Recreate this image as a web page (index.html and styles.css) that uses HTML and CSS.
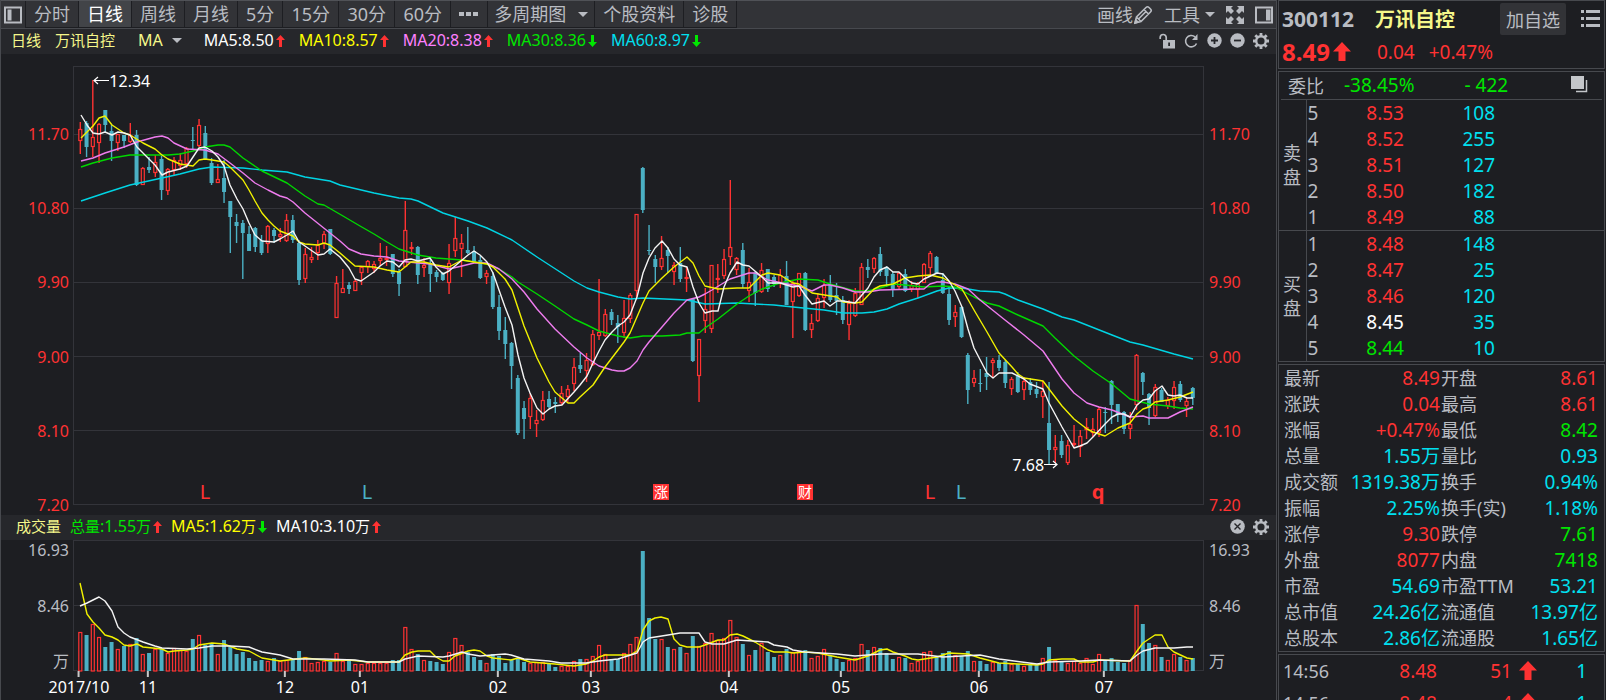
FILE: index.html
```html
<!DOCTYPE html>
<html lang="zh-CN">
<head>
<meta charset="utf-8">
<title>万讯自控 300112</title>
<link rel="stylesheet" href="styles.css">
</head>
<body>
<div class="app">
  <main class="main">
    <header class="toolbar">
      <button class="tool-btn dock-left" aria-label="左侧栏">
        <svg width="18" height="18" viewBox="0 0 18 18"><path d="M1 1.5h16v15H1z" fill="none" stroke="currentColor" stroke-width="2"/><path d="M3.500 3.500h4v11h-4z" fill="currentColor"/></svg>
      </button>
      <nav class="tabs">
        <button class="tab">分时</button>
        <button class="tab active">日线</button>
        <button class="tab">周线</button>
        <button class="tab">月线</button>
        <button class="tab">5分</button>
        <button class="tab minutes">15分</button>
        <button class="tab minutes">30分</button>
        <button class="tab minutes">60分</button>
        <button class="tab more" aria-label="更多"><svg width="20" height="4" viewBox="0 0 20 4"><path d="M0 0h5v4H0zM7 0h5v4H7zM14 0h5v4h-5z" fill="currentColor"/></svg></button>
        <button class="tab multi">多周期图<span class="caret"></span></button>
        <button class="tab wide">个股资料</button>
        <button class="tab wide">诊股</button>
      </nav>
      <div class="tools">
        <button class="tool-btn">画线<svg width="20" height="20" viewBox="0 0 20 20" fill="none" stroke="currentColor" stroke-width="1.6"><path d="M2 18l1.500-6L13 2.500q1.500-1.500 3 0l1.500 1.500q1.500 1.500 0 3L8 16.500zM3.500 12l4.500 4.500M11 4.500L15.500 9M6 13.500l7.500-7.500"/><path d="M2 18l.8-3 2.200 2.200z" fill="currentColor"/></svg></button>
        <button class="tool-btn tool-menu">工具<span class="caret"></span></button>
        <button class="tool-btn" aria-label="全屏"><svg width="18" height="18" viewBox="0 0 18 18" fill="currentColor"><path d="M0 0h7L5 2l3 3-3 3-3-3-2 2zM18 0v7l-2-2-3 3-3-3 3-3-2-2zM0 18v-7l2 2 3-3 3 3-3 3 2 2zM18 18h-7l2-2-3-3 3-3 3 3 2-2z"/></svg></button>
        <button class="tool-btn" aria-label="右侧栏"><svg width="18" height="18" viewBox="0 0 18 18"><path d="M1 1.500h16v15H1z" fill="none" stroke="currentColor" stroke-width="2"/><path d="M11 3.500h4.500v11H11z" fill="currentColor"/></svg></button>
      </div>
    </header>

    <section class="legend">
      <span class="zh pale">日线</span>
      <span class="zh pale stock">万讯自控</span>
      <button class="ma-menu pale">MA<span class="caret"></span></button>
      <div class="ma-list">
        <span class="white">MA5:8.50<svg class="arrow up"><use href="#arrow-up"/></svg></span>
        <span class="yellow">MA10:8.57<svg class="arrow up"><use href="#arrow-up"/></svg></span>
        <span class="violet">MA20:8.38<svg class="arrow up"><use href="#arrow-up"/></svg></span>
        <span class="green">MA30:8.36<svg class="arrow down"><use href="#arrow-down"/></svg></span>
        <span class="cyan">MA60:8.97<svg class="arrow down"><use href="#arrow-down"/></svg></span>
      </div>
      <div class="chart-tools">
        <button aria-label="锁定"><svg width="17" height="16" viewBox="0 0 17 16"><path d="M1.200 6V4.500a3 3 0 0 1 6 0V7" fill="none" stroke="currentColor" stroke-width="1.700"/><path d="M4 7h12v8.500H4zM9.200 9.500v3.500h1.800V9.500z" fill="currentColor" fill-rule="evenodd"/></svg></button>
        <button aria-label="刷新"><svg width="15" height="16" viewBox="0 0 15 16"><path d="M12.500 10.500A5.700 5.700 0 1 1 11 3.800" fill="none" stroke="currentColor" stroke-width="1.600"/><path d="M13.500 1v6H8z" fill="currentColor"/></svg></button>
        <button aria-label="放大"><svg width="15" height="15" viewBox="0 0 15 15"><circle cx="7.500" cy="7.500" r="7.200" fill="currentColor"/><path d="M4 7.500h7M7.500 4v7" stroke="#26272b" stroke-width="1.800"/></svg></button>
        <button aria-label="缩小"><svg width="15" height="15" viewBox="0 0 15 15"><circle cx="7.500" cy="7.500" r="7.200" fill="currentColor"/><path d="M4 7.500h7" stroke="#26272b" stroke-width="1.800"/></svg></button>
        <button aria-label="设置"><svg width="16" height="16" viewBox="0 0 16 16"><use href="#gear"/></svg></button>
      </div>
    </section>

    <section class="price-panel">
      <div class="price-axis left"><span>11.70</span><span>10.80</span><span>9.90</span><span>9.00</span><span>8.10</span><span>7.20</span></div>
      <div class="plot">
        <svg id="price" class="canvas" viewBox="73 66 1131 439" preserveAspectRatio="none"></svg>
        <div class="note high"><svg width="16" height="9" viewBox="0 0 16 9"><path d="M1 4.500h15M5 1L1 4.500 5 8" fill="none" stroke="#fff" stroke-width="1.200"/></svg>12.34</div>
        <div class="note low">7.68<svg width="14" height="9" viewBox="0 0 14 9"><path d="M0 4.500h13M9 1l4 3.500L9 8" fill="none" stroke="#fff" stroke-width="1.200"/></svg></div>
        <div id="events"></div>
      </div>
      <div class="price-axis right"><span>11.70</span><span>10.80</span><span>9.90</span><span>9.00</span><span>8.10</span><span>7.20</span></div>
    </section>

    <section class="legend volume-legend">
      <span class="zh pale">成交量</span>
      <span class="green"><b class="zh">总量</b>:1.55<b class="zh">万</b><svg class="arrow up"><use href="#arrow-up"/></svg></span>
      <span class="yellow">MA5:1.62<b class="zh">万</b><svg class="arrow down"><use href="#arrow-down"/></svg></span>
      <span class="white">MA10:3.10<b class="zh">万</b><svg class="arrow up"><use href="#arrow-up"/></svg></span>
      <div class="chart-tools">
        <button aria-label="关闭"><svg width="15" height="15" viewBox="0 0 15 15"><circle cx="7.500" cy="7.500" r="7.300" fill="currentColor"/><path d="M4.500 4.500l6 6M10.500 4.500l-6 6" stroke="#26272b" stroke-width="1.400"/></svg></button>
        <button aria-label="设置"><svg width="16" height="16" viewBox="0 0 16 16"><use href="#gear"/></svg></button>
      </div>
    </section>

    <section class="volume-panel">
      <div class="volume-axis left"><span>16.93</span><span>8.46</span><span>万</span></div>
      <div class="plot"><svg id="volume" class="canvas" viewBox="73 540 1131 131" preserveAspectRatio="none"></svg></div>
      <div class="volume-axis right"><span>16.93</span><span>8.46</span><span>万</span></div>
    </section>
    <div class="months" id="months"></div>
  </main>

  <aside class="side">
    <section class="box head">
      <div class="head-row">
        <span class="code">300112</span>
        <h1 class="name">万讯自控</h1>
        <button class="add">加自选</button>
        <button class="list" aria-label="列表"><svg width="19" height="17" viewBox="0 0 19 17" fill="currentColor"><path d="M0 0h3v3H0zM5 0h14v3H5zM0 7h3v3H0zM5 7h14v3H5zM0 14h3v3H0zM5 14h14v3H5z"/></svg></button>
      </div>
      <div class="head-row price-row red">
        <strong>8.49</strong><svg class="big-arrow"><use href="#arrow-big"/></svg>
        <span class="change">0.04</span><span>+0.47%</span>
      </div>
    </section>

    <section class="box book">
      <div class="ratio green"><span class="label">委比</span><span class="pct">-38.45%</span><span class="diff">- 422</span>
        <button aria-label="弹出"><svg width="17" height="17" viewBox="0 0 17 17"><path d="M5 15.500h10.500V4" fill="none" stroke="currentColor" stroke-width="1.500"/><path d="M0 0h13v13H0z" fill="currentColor"/></svg></button>
      </div>
      <table class="orders">
        <tr><th rowspan="5" class="vert">卖<br>盘</th><th>5</th><td class="red">8.53</td><td>108</td><td></td></tr>
        <tr><th>4</th><td class="red">8.52</td><td>255</td><td></td></tr>
        <tr><th>3</th><td class="red">8.51</td><td>127</td><td></td></tr>
        <tr><th>2</th><td class="red">8.50</td><td>182</td><td></td></tr>
        <tr><th>1</th><td class="red">8.49</td><td>88</td><td></td></tr>
      </table>
      <table class="orders">
        <tr><th rowspan="5" class="vert">买<br>盘</th><th>1</th><td class="red">8.48</td><td>148</td><td></td></tr>
        <tr><th>2</th><td class="red">8.47</td><td>25</td><td></td></tr>
        <tr><th>3</th><td class="red">8.46</td><td>120</td><td></td></tr>
        <tr><th>4</th><td class="white">8.45</td><td>35</td><td></td></tr>
        <tr><th>5</th><td class="green">8.44</td><td>10</td><td></td></tr>
      </table>
    </section>

    <section class="box">
      <table class="quote">
        <tr><th>最新</th><td class="red">8.49</td><th>开盘</th><td class="red">8.61</td></tr>
        <tr><th>涨跌</th><td class="red">0.04</td><th>最高</th><td class="red">8.61</td></tr>
        <tr><th>涨幅</th><td class="red">+0.47%</td><th>最低</th><td class="green">8.42</td></tr>
        <tr><th>总量</th><td>1.55万</td><th>量比</th><td>0.93</td></tr>
        <tr><th>成交额</th><td>1319.38万</td><th>换手</th><td>0.94%</td></tr>
        <tr><th>振幅</th><td>2.25%</td><th>换手(实)</th><td>1.18%</td></tr>
        <tr><th>涨停</th><td class="red">9.30</td><th>跌停</th><td class="green">7.61</td></tr>
        <tr><th>外盘</th><td class="red">8077</td><th>内盘</th><td class="green">7418</td></tr>
        <tr><th>市盈</th><td>54.69</td><th>市盈TTM</th><td>53.21</td></tr>
        <tr><th>总市值</th><td>24.26亿</th><th>流通值</th><td>13.97亿</td></tr>
        <tr><th>总股本</th><td>2.86亿</th><th>流通股</th><td>1.65亿</td></tr>
      </table>
    </section>

    <section class="box trades-box">
      <table class="trades">
        <tr><th>14:56</th><td class="red">8.48</td><td class="red">51</td><td class="red dir"><svg class="big-arrow"><use href="#arrow-big"/></svg></td><td>1</td></tr>
        <tr><th>14:56</th><td class="red">8.48</td><td class="red">4</td><td class="red dir"><svg class="big-arrow"><use href="#arrow-big"/></svg></td><td>1</td></tr>
      </table>
    </section>
  </aside>
</div>

<svg class="defs" width="0" height="0">
  <symbol id="arrow-up" viewBox="0 0 9 12"><path d="M4.500 0L9 5H6v7H3V5H0z" fill="#ff3232"/></symbol>
  <symbol id="arrow-down" viewBox="0 0 9 12"><path d="M4.500 12L0 7h3V0h3v7h3z" fill="#00e600"/></symbol>
  <symbol id="arrow-big" viewBox="0 0 18 19"><path d="M9 0l9 9.500h-5.500V19h-7V9.500H0z" fill="#ff3232"/></symbol>
  <symbol id="gear" viewBox="0 0 16 16"><circle cx="8" cy="8" r="4.800" fill="none" stroke="currentColor" stroke-width="2.400"/><path d="M8 0v3.500M8 12.500V16M0 8h3.500M12.500 8H16M2.300 2.300l2.500 2.500M11.200 11.200l2.500 2.500M13.700 2.300l-2.500 2.500M4.800 11.200l-2.500 2.500" stroke="currentColor" stroke-width="2.800"/></symbol>
</svg>
<script src="chart.js"></script>
</body>
</html>
```

FILE: styles.css
```css
* { box-sizing: border-box; }

body {
  margin: 0;
  background: #1d1e22;
  color: #b9bcc2;
  font-family: "Noto Sans", "Noto Sans CJK SC", sans-serif;
  font-size: 16px;
}

button {
  margin: 0;
  padding: 0;
  border: 0;
  background: none;
  color: inherit;
  font: inherit;
  white-space: nowrap;
}

svg { display: block; flex: none; }
.defs { position: absolute; }

.red { color: #ff3232; }
.green { color: #00e600; }
.white { color: #fff; }
.yellow { color: #ffff00; }
.violet { color: #ff80ff; }
.cyan { color: #00e0f0; }
.pale { color: #f5f78a; }
.zh { font-size: 15px; font-weight: 400; }

.app {
  display: grid;
  grid-template-columns: minmax(0, 1fr) 329px;
  height: 100vh;
  overflow: hidden;
}

.main {
  display: flex;
  flex-direction: column;
  min-width: 0;
  border-left: 1px solid #47494e;
  border-right: 1px solid #47494e;
}

/* toolbar */
.toolbar {
  display: flex;
  align-items: stretch;
  height: 29px;
  flex: none;
  background: #323337;
  border-top: 1px solid #505257;
  border-bottom: 1px solid #47494e;
  font-size: 18px;
  line-height: 26px;
}
.tabs { display: flex; }
.tab {
  display: flex;
  align-items: center;
  justify-content: center;
  padding: 0 8px;
  border-right: 1px solid #1d1e22;
  border-bottom: 1px solid #1d1e22;
}
.tab.active { background: #424448; color: #fff; }
.tab.minutes { min-width: 56px; }
.tab.more { min-width: 37px; }
.tab.multi { padding: 0 6px; gap: 12px; }
.tab.wide { padding: 0 8px; }
.dock-left { padding: 0 3px; border-right: 1px solid #1d1e22; }
.caret {
  border: 5px solid transparent;
  border-top-color: #b9bcc2;
  border-bottom: 0;
}
.tools {
  display: flex;
  gap: 11px;
  margin-left: auto;
  padding-right: 3px;
}
.tool-btn { display: flex; align-items: center; }
.tool-menu { gap: 5px; }

/* legends */
.legend {
  display: flex;
  align-items: center;
  flex: none;
  height: 25px;
  padding: 0 7px 2px 10px;
  background: #26272b;
  line-height: 23px;
  white-space: nowrap;
}
.legend > span, .ma-list > span { display: flex; align-items: center; }
.stock { margin-left: 14px; }
.ma-menu { display: flex; align-items: center; gap: 9px; margin-left: 23px; }
.ma-list { display: flex; gap: 14px; margin-left: 22px; }
.arrow { width: 9px; height: 12px; margin-left: 2px; }
.chart-tools {
  display: flex;
  align-items: center;
  gap: 8px;
  margin-left: auto;
}
.volume-legend { gap: 9px; margin-top: 10px; padding-left: 15px; }

/* plots */
.price-panel, .volume-panel {
  display: grid;
  grid-template-columns: 72px minmax(0, 1fr) 72px;
}
.price-panel { flex: 1; min-height: 200px; padding-top: 12px; }
.volume-panel { flex: none; height: 131px; }
.plot { position: relative; min-height: 0; }
.canvas { position: absolute; inset: 0; width: 100%; height: 100%; overflow: visible; }

.price-axis {
  display: grid;
  grid-template-rows: 68fr repeat(5, 74fr);
  color: #ff3232;
  line-height: 20px;
}
.price-axis span { align-self: end; margin-bottom: -10px; }
.volume-axis {
  display: flex;
  flex-direction: column;
  justify-content: space-between;
  line-height: 20px;
}
.left { padding-right: 4px; text-align: right; }
.right { padding-left: 5px; text-align: left; }

.grid { stroke: #33343a; stroke-width: 1; }
.frame { fill: none; stroke: #33343a; stroke-width: 1; }
.up-body { fill: #1d1e22; stroke: #ff3232; stroke-width: 1.2; }
.up-wick { fill: #ff3232; }
.down { fill: #4bb0c4; }
.line { fill: none; stroke-width: 1.4; stroke-linejoin: round; }
.line-white { stroke: #f4f4f4; }
.line-yellow { stroke: #f2f200; }
.line-violet { stroke: #ee7cee; }
.line-green { stroke: #00d800; }
.line-cyan { stroke: #00d4e4; }

/* annotations lie over the candles */
.note {
  position: absolute;
  display: flex;
  align-items: center;
  color: #fff;
  line-height: 20px;
  transform: translateY(-50%);
}
.note.high { left: 1.8%; top: 3.4%; }
.note.low { right: 12.9%; top: 90.8%; }

.event {
  position: absolute;
  transform: translate(-50%, -50%);
  font-size: 20px;
  line-height: 20px;
}
.event.strong { font-weight: 700; }
.event.blue { color: #4bb0c4; }
.event.badge {
  width: 16px;
  height: 16px;
  background: #ff3232;
  color: #fff;
  font-size: 14px;
  line-height: 16px;
  text-align: center;
}

.months {
  position: relative;
  flex: none;
  height: 29px;
  margin: 0 72px;
  color: #fff;
}
.month {
  position: absolute;
  display: flex;
  flex-direction: column;
  align-items: center;
  transform: translateX(-50%);
  line-height: 20px;
}
.month::before { content: ""; width: 2px; height: 6px; background: #c8c8c8; }

/* side panel */
.side {
  display: flex;
  flex-direction: column;
  gap: 2px;
  min-height: 0;
  padding: 0 1px;
  font-size: 19px;
}
.box { flex: none; border: 1px solid #47494e; }

.head { padding: 1px 4px 0 3px; height: 69px; }
.head-row { display: flex; align-items: center; height: 33px; }
.code { font-size: 21px; font-weight: 700; }
.name { margin: 0 0 0 21px; color: #f5f78a; font-size: 20px; font-weight: 700; }
.add {
  height: 32px;
  margin-left: auto;
  padding: 0 6px;
  border-radius: 2px;
  background: #323337;
  font-size: 18px;
}
.list { margin: 0 0 0 15px; }
.price-row strong { font-size: 24px; }
.big-arrow { width: 18px; height: 19px; margin-left: 3px; }
.change { margin: 0 14px 0 26px; }

.ratio {
  display: flex;
  align-items: center;
  height: 28px;
  margin: 0 2px;
  padding: 0 14px 2px 7px;
  border-bottom: 1px solid #47494e;
}
.ratio .label { color: #b9bcc2; font-size: 18px; }
.ratio .pct { margin-left: 20px; }
.ratio .diff { margin-left: 50px; }
.ratio button { margin-left: auto; color: #c4c6ca; }

table { width: 100%; border-collapse: collapse; table-layout: fixed; }
th { padding: 0; font-weight: 400; font-size: 18px; text-align: left; white-space: nowrap; }
td { padding: 0; color: #00e0f0; text-align: right; white-space: nowrap; }
td.red { color: #ff3232; }
td.green { color: #00e600; }
td.white { color: #fff; }
tr { height: 26px; line-height: 24px; }

.orders + .orders { border-top: 1px solid #47494e; }
.orders th { width: 24px; padding-left: 1px; font-size: 19px; }
.orders .vert {
  width: 27px;
  padding-left: 4px;
  border-right: 1px solid #47494e;
  font-size: 18px;
}
.orders td { width: 74px; }
.orders td:nth-last-child(2) { width: 91px; }
.orders td:last-child { width: auto; }

.quote th { width: 80px; }
.quote th:first-child { width: 60px; padding-left: 5px; }
.quote td:nth-child(2) { width: 102px; padding-right: 1px; }
.quote td:last-child { padding-right: 6px; }

.trades-box { flex: 1 0 0; min-height: 0; border-bottom: 0; }
.trades tr { height: 32px; }
.trades th { width: 60px; padding-left: 4px; }
.trades td { width: 98px; }
.trades td:nth-child(3) { width: 75px; }
.trades td.dir { width: 28px; }
.trades td.dir svg { margin-left: 7px; }
.trades td:last-child { width: auto; padding-right: 17px; }
```

FILE: chart.js
```js
// One candle per entry: direction (r up, b down), high, body top, body bottom, low, volume top.
const candles = `
r 122 129 141 154 632;b 121 123 147 157 635;r 80 137 147 157 624;r 123 124 143 163 637;b 110 110 125 132 647
b 125 131 141 161 642;r 134 134 143 151 649;b 135 135 141 148 646;r 123 135 142 143 644;b 130 135 185 186 638
r 167 168 185 185 654;b 157 167 170 173 653;r 155 162 173 177 649;b 156 159 190 200 649;r 168 169 191 195 653
r 157 160 170 176 648;r 153 160 166 170 650;r 147 148 164 168 651;b 127 140 141 149 639;r 119 125 146 147 635
b 126 133 159 160 645;b 158 163 183 185 643;r 164 179 183 183 654;b 160 178 192 203 640;b 201 201 217 253 647
b 214 222 226 243 654;b 220 223 233 279 652;b 226 234 251 251 658;b 227 228 247 252 661;b 235 240 253 255 660
r 225 226 244 253 661;b 228 230 236 243 658;r 228 234 237 242 661;r 214 220 241 242 660;b 215 220 240 243 659
b 240 243 280 285 651;r 248 254 279 283 657;r 247 257 260 263 663;r 240 245 253 260 662;r 231 234 244 249 661
b 229 229 254 255 662;r 276 283 318 318 653;r 269 288 293 293 661;b 282 285 289 294 661;r 279 281 291 291 664
r 267 267 273 285 664;r 260 261 267 273 663;r 261 264 269 273 663;r 243 258 261 266 663;r 246 258 260 266 663
b 254 254 274 277 660;b 269 272 284 296 660;r 201 230 267 267 627;r 242 247 248 255 649;b 246 247 275 284 654
r 258 265 268 277 660;b 258 263 274 292 661;b 270 272 277 282 662;b 272 273 280 281 664;r 244 263 283 294 652
r 217 238 251 257 638;r 234 243 249 277 645;b 227 250 253 254 652;b 246 251 262 263 657;b 256 260 278 279 660
r 270 273 277 284 663;b 272 276 307 309 654;b 295 307 331 340 656;b 317 330 344 359 663;b 342 343 366 389 660
b 375 378 433 435 659;b 401 408 419 439 662;r 393 398 417 429 663;r 410 420 424 437 662;r 391 400 420 421 662
b 391 399 407 408 664;b 397 402 404 413 667;r 386 393 403 405 666;r 385 389 397 402 666;r 358 367 384 391 661
b 353 365 369 373 659;r 353 360 371 382 659;r 330 334 365 366 656;r 279 332 336 340 645;r 309 314 336 337 654
b 309 312 320 325 659;b 315 323 327 343 659;r 300 318 333 338 653;r 293 295 319 323 644;r 214 214 291 297 637
b 167 168 210 213 551;b 225 250 251 255 618;b 255 259 267 283 639;r 236 258 267 270 639;b 247 250 256 273 647
r 262 265 272 285 649;b 247 263 279 282 647;r 267 277 279 292 653;b 298 299 361 362 636;r 339 339 376 402 646
r 288 309 321 333 643;r 265 265 329 333 633;r 264 278 280 293 640;r 249 259 276 279 638;r 180 247 257 265 620
r 257 258 270 275 637;b 243 250 284 288 644;r 268 282 291 302 655;b 271 273 293 306 650;r 263 270 292 293 643
b 269 269 289 292 652;b 275 277 284 287 657;r 269 275 283 288 655;b 261 276 305 305 649;r 281 283 302 338 652
r 273 273 296 297 651;b 272 273 330 331 650;r 314 323 330 338 658;r 293 298 321 322 656;r 279 285 298 308 649
b 275 284 300 302 656;b 283 295 301 315 659;b 296 300 320 324 662;r 300 303 325 340 660;r 288 293 316 317 658
r 263 267 305 305 644;b 259 267 270 278 650;r 257 258 269 273 647;b 247 254 272 276 648;b 266 267 276 287 653
b 272 274 289 297 659;r 272 273 287 290 657;b 269 274 291 292 658;r 281 285 289 292 663;r 282 283 290 298 661
r 263 264 283 283 652;r 251 253 268 275 651;b 256 257 273 273 656;b 273 280 293 294 653;b 287 294 320 325 651
r 305 312 317 327 655;b 306 307 337 338 656;b 353 355 390 404 651;r 370 378 383 387 661;b 369 383 384 392 661
b 357 373 377 390 664;r 358 360 363 377 662;b 355 360 368 371 663;b 360 362 383 388 661;r 377 379 389 395 664
b 372 375 392 393 664;r 377 381 390 400 666;b 378 382 390 395 665;b 382 389 394 398 665;r 381 391 397 418 658
b 382 423 450 464 647;r 435 447 450 463 660;b 435 441 455 458 662;r 440 445 463 465 663;r 425 443 445 448 661
r 430 436 447 457 663;r 418 427 430 439 658;r 418 429 433 437 664;r 407 409 433 437 654;b 407 412 413 433 660
b 380 381 405 424 658;b 404 404 415 422 662;b 411 412 429 434 663;r 412 424 429 439 660;r 354 355 405 410 605
b 372 373 382 395 624;b 393 394 408 425 643;r 384 387 416 417 645;b 388 390 402 402 657;r 397 400 406 409 660
r 381 387 401 409 654;b 381 384 400 402 657;r 398 401 406 417 660;b 387 388 398 405 658`
  .trim().split(/[;\n]/).map(s => s.split(' '));

const priceLines = {
  cyan: '81,201 105,193 130,185 162,178 180,174 199,169 212,167 243,168 262,170 287,172 305,177 330,181 340,185 374,193 399,198 411,199 418,201 443,213 468,221 487,228 512,240 537,257 574,281 587,288 599,292 618,297 630,299 643,298 687,300 705,304 737,303 774,305 793,307 824,310 843,313 862,313 874,312 887,309 899,304 918,298 937,291 949,288 962,288 980,291 999,292 1005,294 1018,300 1043,309 1062,317 1074,320 1112,335 1130,342 1143,345 1174,354 1193,359',
  green: '81,167 93,163 112,158 130,155 168,155 180,154 193,151 205,147 218,145 224,145 230,147 243,158 262,171 287,183 305,196 318,204 324,205 343,216 360,226 374,234 387,242 399,249 418,255 436,258 462,260 487,264 499,269 512,277 518,282 537,294 555,306 574,319 587,325 599,331 618,336 630,338 643,336 662,336 680,335 687,333 699,333 705,328 718,319 737,304 749,296 762,289 780,283 799,279 818,280 830,284 855,291 868,291 880,288 893,284 905,285 924,287 943,286 955,287 974,297 987,303 999,306 1018,315 1043,326 1055,338 1074,356 1093,371 1112,384 1130,399 1149,404 1168,406 1180,408 1193,409',
  violet: '81,161 93,158 105,153 124,147 137,142 155,137 162,136 168,138 174,143 187,149 205,150 218,154 230,163 243,173 255,183 268,190 280,196 287,198 293,202 305,213 330,233 340,241 349,249 361,254 374,256 387,257 399,261 418,263 430,264 449,269 462,266 474,263 487,263 499,269 512,279 524,292 537,309 555,329 574,347 587,358 599,366 612,370 618,371 624,371 630,368 637,361 643,350 649,342 662,327 674,313 687,300 699,297 705,294 712,290 730,279 749,273 755,273 768,280 787,284 799,286 812,291 824,285 830,285 843,288 855,292 868,292 880,290 918,289 924,289 930,284 937,282 943,282 955,284 968,289 980,300 1005,320 1024,335 1043,351 1062,379 1074,393 1087,403 1099,407 1112,410 1130,417 1143,416 1149,418 1168,418 1180,412 1193,407',
  yellow: '81,138 93,126 99,118 105,116 112,125 124,133 130,135 143,143 155,149 162,155 168,159 180,164 193,166 199,160 205,159 212,160 224,162 230,167 243,180 249,190 255,201 262,213 268,220 274,226 280,231 293,236 299,242 305,244 318,245 324,243 330,245 340,253 355,266 374,267 387,270 399,272 411,262 424,262 436,265 449,267 462,260 474,262 487,264 493,267 505,279 512,290 518,308 524,326 537,358 549,382 555,392 562,398 568,403 574,403 580,397 593,385 605,367 618,350 624,342 630,333 643,303 649,291 662,278 674,267 687,257 693,263 699,276 705,286 718,289 737,288 749,288 762,275 768,273 780,275 793,283 799,284 812,293 837,297 843,302 855,303 862,302 874,289 880,286 893,284 905,278 918,276 930,275 943,278 962,289 974,310 987,332 999,353 1012,367 1018,374 1024,378 1037,380 1043,381 1049,389 1062,406 1074,419 1087,429 1093,432 1105,436 1118,428 1130,423 1137,414 1143,409 1149,407 1155,402 1168,400 1180,397 1193,392',
  white: '81,115 87,125 93,133 99,134 105,132 112,135 118,132 124,133 130,135 137,147 149,159 155,165 162,175 168,172 180,169 187,166 193,157 199,148 205,147 212,151 218,157 224,166 230,185 237,199 243,209 249,223 255,235 262,241 274,242 280,239 287,235 293,231 299,242 305,246 318,255 324,254 330,249 340,257 349,268 355,279 361,281 374,272 380,266 387,261 393,262 399,267 405,260 411,259 418,261 430,258 436,267 443,274 449,271 455,266 468,255 474,251 480,255 487,262 493,273 499,290 505,307 512,325 518,355 524,378 530,393 537,408 543,414 549,409 555,406 562,405 574,392 580,385 587,376 593,363 599,351 605,340 612,332 618,326 624,322 630,315 637,297 643,273 649,258 655,248 662,241 668,248 674,259 680,265 687,267 693,287 699,303 705,313 712,311 718,311 724,287 730,273 737,262 743,265 749,266 762,277 768,283 780,283 793,287 799,286 805,295 812,304 824,301 830,306 837,301 843,301 855,303 868,288 874,277 880,270 887,267 893,272 899,272 905,278 912,283 918,284 924,279 937,273 943,274 949,281 955,291 962,307 968,329 974,348 987,373 993,378 999,373 1012,373 1024,379 1030,384 1043,389 1049,403 1062,427 1074,448 1080,446 1087,443 1093,437 1105,424 1112,417 1118,414 1124,414 1130,417 1137,405 1143,400 1149,399 1155,391 1162,386 1168,395 1174,396 1180,395 1187,398 1193,398'
};

const volumeLines = {
  yellow: '80,583 87,614 93,622 99,628 105,635 112,637 118,640 124,645 130,646 137,644 143,647 162,649 168,652 174,651 187,650 193,649 199,645 212,643 224,644 237,649 249,651 262,658 280,661 305,658 324,660 330,661 349,660 368,662 399,662 405,655 412,652 418,651 430,651 436,657 443,661 449,661 455,656 468,651 474,650 480,651 487,656 493,658 511,660 518,658 530,662 555,664 574,666 586,664 593,661 599,657 605,655 630,655 637,651 643,630 649,621 655,618 661,617 668,619 674,639 680,645 687,647 699,647 705,645 718,640 724,640 730,635 737,634 743,636 755,642 768,650 774,652 787,652 793,653 805,652 818,653 837,657 855,660 868,656 880,650 887,649 893,652 905,656 912,659 918,660 937,657 949,653 968,654 980,658 999,663 1018,664 1037,665 1043,664 1049,660 1062,659 1074,659 1080,662 1093,662 1099,660 1130,661 1137,651 1143,643 1155,635 1162,635 1168,647 1174,652 1187,658 1193,659',
  white: '80,606 87,603 93,600 99,597 105,601 112,611 118,627 124,633 130,637 143,642 155,646 162,648 187,649 199,648 212,646 230,646 249,647 262,652 280,655 293,659 324,659 355,660 368,662 399,662 405,659 418,656 443,657 449,656 462,652 468,654 480,656 505,654 511,655 524,659 549,661 561,663 586,663 599,661 618,659 637,653 643,642 649,638 668,635 680,633 699,633 705,642 712,644 724,644 737,640 768,642 774,645 787,647 793,650 805,652 837,654 855,656 880,654 918,654 943,657 980,655 999,659 1037,664 1049,662 1080,661 1099,660 1130,661 1137,655 1143,651 1155,648 1174,648 1187,647 1193,647'
};

const LEFT = 73, WIDTH = 1131, TOP = 66, HEIGHT = 439;
const percentX = x => (x - LEFT) / WIDTH * 100 + '%';
const rect = (cls, x, y, w, h) => `<rect class="${cls}" x="${x}" y="${y}" width="${w}" height="${h}"/>`;
const grid = y => `<line class="grid" x1="73" x2="1204" y1="${y}" y2="${y}"/>`;
const lines = set => Object.entries(set)
  .map(([name, points]) => `<polyline class="line line-${name}" points="${points}"/>`).join('');

let price = [134.5, 208.5, 282.5, 356.5, 430.5].map(grid).join('') +
  '<rect class="frame" x="73.5" y="66.5" width="1130" height="438"/>';
let volume = grid(605.5) + '<rect class="frame" x="73.5" y="540.5" width="1130" height="130"/>';

candles.forEach(([dir, ...values], i) => {
  const [high, top, bottom, low, vol] = values.map(Number);
  const x = 80.3 + i * 6.25;
  if (dir === 'r') {
    price += rect('up-wick', x - 0.7, high, 1.4, low - high);
    price += rect('up-body', x - 1.5, top + 0.5, 3, Math.max(bottom - top - 1, 1));
    volume += rect('up-body', x - 1.5, vol + 0.5, 3, 670.5 - vol);
  } else {
    price += rect('down', x - 0.7, high, 1.4, low - high);
    price += rect('down', x - 2, top, 4, bottom - top);
    volume += rect('down', x - 2, vol, 4, 671 - vol);
  }
});

document.getElementById('price').innerHTML = price + lines(priceLines);
document.getElementById('volume').innerHTML = volume + lines(volumeLines);

const events = [
  [205, 'L', 'red'], [367, 'L', 'blue'], [661, '涨', 'badge'], [805, '财', 'badge'],
  [930, 'L', 'red'], [961, 'L', 'blue'], [1098, 'q', 'red strong']
];
document.getElementById('events').innerHTML = events.map(([x, text, cls]) =>
  `<span class="event ${cls}" style="left:${percentX(x)};top:${(492 - TOP) / HEIGHT * 100}%">${text}</span>`).join('');

const months = [
  [79, '2017/10'], [148, '11'], [285, '12'], [360, '01'], [498, '02'],
  [591, '03'], [729, '04'], [841, '05'], [979, '06'], [1104, '07']
];
document.getElementById('months').innerHTML = months.map(([x, text]) =>
  `<span class="month" style="left:${percentX(x)}">${text}</span>`).join('');
```
